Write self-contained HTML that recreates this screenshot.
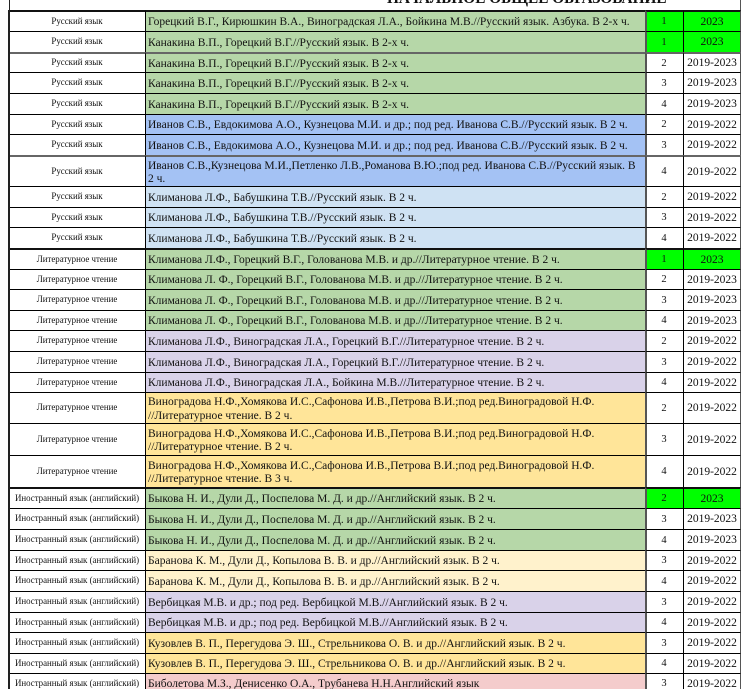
<!DOCTYPE html>
<html lang="ru">
<head>
<meta charset="utf-8">
<title>Начальное общее образование</title>
<style>
html,body{margin:0;padding:0;background:#fff}
body{width:742px;height:689px;position:relative;overflow:hidden;font-family:"Liberation Serif","Noto Serif CJK SC",serif;color:#111}
#w{position:absolute;left:0;top:0;width:742px;height:689px;overflow:hidden;filter:blur(.35px)}
.r{position:absolute;left:9px;width:732px;display:block}
.r>div{position:absolute;top:0;bottom:0;box-sizing:border-box;border-top:1px solid #000;display:flex;align-items:center;white-space:nowrap}
.t>div{border-top:2px solid #111}
.s>div{border-top:2px solid #666}
.a{left:0;width:136px;justify-content:center;font-size:8.9px;background:#fff;padding-bottom:2px}
.b{left:136px;width:500px;border-left:1px solid #000;padding-left:2px;padding-top:3px;font-size:11.5px;line-height:13.5px}
.c{left:636px;width:38px;border-left:2px solid #555;justify-content:center;font-size:10.5px;background:#fff;padding-right:2px}
.d{left:674px;width:58px;border-left:1px solid #000;border-right:1px solid #555;justify-content:center;font-size:11.5px;background:#fff}
.g{background:#b6d7a8}.u{background:#a4c2f4}.l{background:#cfe2f3}.p{background:#d9d2e9}.o{background:#ffe599}.y{background:#fff2cc}.k{background:#f4cccc}
.n{background:#0f0!important}
#h{position:absolute;left:387px;top:-9px;font-size:15.3px;font-weight:bold;white-space:nowrap;line-height:16px}
#lv{position:absolute;left:8px;top:10px;width:2px;height:679px;background:#222}
#lh{position:absolute;left:9px;top:0;width:1px;height:10px;background:#222}
#rh{position:absolute;left:740px;top:0;width:1px;height:10px;background:#555}
</style>
</head>
<body>
<div id="w">
<div id="h">НАЧАЛЬНОЕ ОБЩЕЕ ОБРАЗОВАНИЕ</div>
<div id="lh"></div><div id="rh"></div>

<div class="r t" style="top:10px;height:21px"><div class="a">Русский язык</div><div class="b g">Горецкий В.Г., Кирюшкин В.А., Виноградская Л.А., Бойкина М.В.//Русский язык. Азбука. В 2-х ч.</div><div class="c n">1</div><div class="d n">2023</div></div>
<div class="r" style="top:31px;height:21px"><div class="a">Русский язык</div><div class="b g">Канакина В.П., Горецкий В.Г.//Русский язык. В 2-х ч.</div><div class="c n">1</div><div class="d n">2023</div></div>
<div class="r s" style="top:52px;height:20px"><div class="a">Русский язык</div><div class="b g">Канакина В.П., Горецкий В.Г.//Русский язык. В 2-х ч.</div><div class="c">2</div><div class="d">2019-2023</div></div>
<div class="r" style="top:72px;height:21px"><div class="a">Русский язык</div><div class="b g">Канакина В.П., Горецкий В.Г.//Русский язык. В 2-х ч.</div><div class="c">3</div><div class="d">2019-2023</div></div>
<div class="r" style="top:93px;height:21px"><div class="a">Русский язык</div><div class="b g">Канакина В.П., Горецкий В.Г.//Русский язык. В 2-х ч.</div><div class="c">4</div><div class="d">2019-2023</div></div>
<div class="r" style="top:114px;height:20px"><div class="a">Русский язык</div><div class="b u">Иванов С.В., Евдокимова А.О., Кузнецова М.И. и др.; под ред. Иванова С.В.//Русский язык. В 2 ч.</div><div class="c">2</div><div class="d">2019-2022</div></div>
<div class="r" style="top:134px;height:21px"><div class="a">Русский язык</div><div class="b u">Иванов С.В., Евдокимова А.О., Кузнецова М.И. и др.; под ред. Иванова С.В.//Русский язык. В 2 ч.</div><div class="c">3</div><div class="d">2019-2022</div></div>
<div class="r s" style="top:155px;height:31px"><div class="a">Русский язык</div><div class="b u"><span>Иванов С.В.,Кузнецова М.И.,Петленко Л.В.,Романова В.Ю.;под ред. Иванова С.В.//Русский язык. В<br>2 ч.</span></div><div class="c">4</div><div class="d">2019-2022</div></div>
<div class="r" style="top:186px;height:21px"><div class="a">Русский язык</div><div class="b l">Климанова Л.Ф., Бабушкина Т.В.//Русский язык. В 2 ч.</div><div class="c">2</div><div class="d">2019-2022</div></div>
<div class="r" style="top:207px;height:20px"><div class="a">Русский язык</div><div class="b l">Климанова Л.Ф., Бабушкина Т.В.//Русский язык. В 2 ч.</div><div class="c">3</div><div class="d">2019-2022</div></div>
<div class="r" style="top:227px;height:21px"><div class="a">Русский язык</div><div class="b l">Климанова Л.Ф., Бабушкина Т.В.//Русский язык. В 2 ч.</div><div class="c">4</div><div class="d">2019-2022</div></div>

<div class="r t" style="top:248px;height:21px"><div class="a">Литературное чтение</div><div class="b g">Климанова Л.Ф., Горецкий В.Г., Голованова М.В. и др.//Литературное чтение. В 2 ч.</div><div class="c n">1</div><div class="d n">2023</div></div>
<div class="r" style="top:269px;height:20px"><div class="a">Литературное чтение</div><div class="b g">Климанова Л. Ф., Горецкий В.Г., Голованова М.В. и др.//Литературное чтение. В 2 ч.</div><div class="c">2</div><div class="d">2019-2023</div></div>
<div class="r" style="top:289px;height:21px"><div class="a">Литературное чтение</div><div class="b g">Климанова Л. Ф., Горецкий В.Г., Голованова М.В. и др.//Литературное чтение. В 2 ч.</div><div class="c">3</div><div class="d">2019-2023</div></div>
<div class="r" style="top:310px;height:20px"><div class="a">Литературное чтение</div><div class="b g">Климанова Л. Ф., Горецкий В.Г., Голованова М.В. и др.//Литературное чтение. В 2 ч.</div><div class="c">4</div><div class="d">2019-2023</div></div>
<div class="r" style="top:330px;height:21px"><div class="a">Литературное чтение</div><div class="b p">Климанова Л.Ф., Виноградская Л.А., Горецкий В.Г.//Литературное чтение. В 2 ч.</div><div class="c">2</div><div class="d">2019-2022</div></div>
<div class="r" style="top:351px;height:21px"><div class="a">Литературное чтение</div><div class="b p">Климанова Л.Ф., Виноградская Л.А., Горецкий В.Г.//Литературное чтение. В 2 ч.</div><div class="c">3</div><div class="d">2019-2022</div></div>
<div class="r" style="top:372px;height:20px"><div class="a">Литературное чтение</div><div class="b p">Климанова Л.Ф., Виноградская Л.А., Бойкина М.В.//Литературное чтение. В 2 ч.</div><div class="c">4</div><div class="d">2019-2022</div></div>
<div class="r" style="top:392px;height:31px"><div class="a">Литературное чтение</div><div class="b o"><span>Виноградова Н.Ф.,Хомякова И.С.,Сафонова И.В.,Петрова В.И.;под ред.Виноградовой Н.Ф.<br>//Литературное чтение. В 2 ч.</span></div><div class="c">2</div><div class="d">2019-2022</div></div>
<div class="r" style="top:423px;height:32px"><div class="a">Литературное чтение</div><div class="b o"><span>Виноградова Н.Ф.,Хомякова И.С.,Сафонова И.В.,Петрова В.И.;под ред.Виноградовой Н.Ф.<br>//Литературное чтение. В 2 ч.</span></div><div class="c">3</div><div class="d">2019-2022</div></div>
<div class="r" style="top:455px;height:32px"><div class="a">Литературное чтение</div><div class="b o"><span>Виноградова Н.Ф.,Хомякова И.С.,Сафонова И.В.,Петрова В.И.;под ред.Виноградовой Н.Ф.<br>//Литературное чтение. В 3 ч.</span></div><div class="c">4</div><div class="d">2019-2022</div></div>

<div class="r t" style="top:487px;height:21px"><div class="a">Иностранный язык (английский)</div><div class="b g">Быкова Н. И., Дули Д., Поспелова М. Д. и др.//Английский язык. В 2 ч.</div><div class="c n">2</div><div class="d n">2023</div></div>
<div class="r" style="top:508px;height:21px"><div class="a">Иностранный язык (английский)</div><div class="b g">Быкова Н. И., Дули Д., Поспелова М. Д. и др.//Английский язык. В 2 ч.</div><div class="c">3</div><div class="d">2019-2023</div></div>
<div class="r" style="top:529px;height:21px"><div class="a">Иностранный язык (английский)</div><div class="b g">Быкова Н. И., Дули Д., Поспелова М. Д. и др.//Английский язык. В 2 ч.</div><div class="c">4</div><div class="d">2019-2023</div></div>
<div class="r" style="top:550px;height:20px"><div class="a">Иностранный язык (английский)</div><div class="b y">Баранова К. М., Дули Д., Копылова В. В. и др.//Английский язык. В 2 ч.</div><div class="c">3</div><div class="d">2019-2022</div></div>
<div class="r" style="top:570px;height:21px"><div class="a">Иностранный язык (английский)</div><div class="b y">Баранова К. М., Дули Д., Копылова В. В. и др.//Английский язык. В 2 ч.</div><div class="c">4</div><div class="d">2019-2022</div></div>
<div class="r" style="top:591px;height:21px"><div class="a">Иностранный язык (английский)</div><div class="b p">Вербицкая М.В. и др.; под ред. Вербицкой М.В.//Английский язык. В 2 ч.</div><div class="c">3</div><div class="d">2019-2022</div></div>
<div class="r" style="top:612px;height:20px"><div class="a">Иностранный язык (английский)</div><div class="b p">Вербицкая М.В. и др.; под ред. Вербицкой М.В.//Английский язык. В 2 ч.</div><div class="c">4</div><div class="d">2019-2022</div></div>
<div class="r" style="top:632px;height:21px"><div class="a">Иностранный язык (английский)</div><div class="b o">Кузовлев В. П., Перегудова Э. Ш., Стрельникова О. В. и др.//Английский язык. В 2 ч.</div><div class="c">3</div><div class="d">2019-2022</div></div>
<div class="r" style="top:653px;height:20px"><div class="a">Иностранный язык (английский)</div><div class="b o">Кузовлев В. П., Перегудова Э. Ш., Стрельникова О. В. и др.//Английский язык. В 2 ч.</div><div class="c">4</div><div class="d">2019-2022</div></div>
<div class="r" style="top:673px;height:20px"><div class="a">Иностранный язык (английский)</div><div class="b k">Биболетова М.З., Денисенко О.А., Трубанева Н.Н.Английский язык</div><div class="c">3</div><div class="d">2019-2022</div></div>
<div id="lv"></div>
</div>
</body>
</html>
